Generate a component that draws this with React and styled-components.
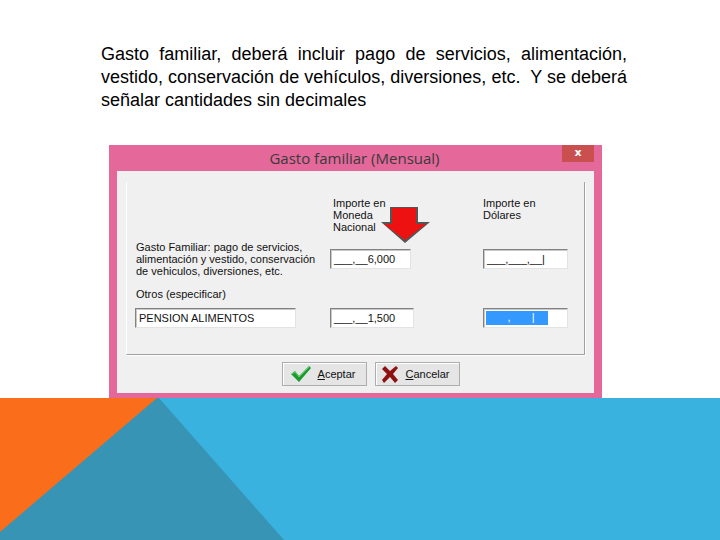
import React from "react";
import styled, { createGlobalStyle } from "styled-components";

const GlobalStyle = createGlobalStyle`
  html, body { margin: 0; padding: 0; background: #fff; }
  body { width: 720px; height: 540px; overflow: hidden; }
`;

const Slide = styled.div`
  width: 720px;
  height: 540px;
  display: flex;
  flex-direction: column;
  background: #fff;
`;

const Intro = styled.p`
  margin: 43px 0 0 101px;
  width: 526px;
  font-family: "Liberation Sans", Arial, sans-serif;
  font-size: 18px;
  line-height: 23px;
  text-align: justify;
  color: #000;
`;

const Dialog = styled.div`
  margin: 33px 0 0 109px;
  width: 493px;
  height: 253px;
  box-sizing: border-box;
  background: #e4689a;
  padding: 0 8px 5px 8px;
  display: flex;
  flex-direction: column;
  font-family: "Liberation Sans", Arial, sans-serif;
  font-size: 11px;
  color: #111;
  flex-shrink: 0;
`;

const TitleBar = styled.div`
  height: 26px;
  display: flex;
  align-items: flex-start;
`;

const Title = styled.div`
  flex: 1;
  text-align: center;
  font-family: "Open Sans", "DejaVu Sans", sans-serif;
  font-size: 15px;
  line-height: 26px;
  color: #3a3a3a;
  padding-left: 30px;
`;

const CloseBtn = styled.div`
  width: 32px;
  height: 17px;
  background: #c9504f;
  color: #fff;
  font-family: "DejaVu Sans", sans-serif;
  font-size: 11px;
  font-weight: bold;
  line-height: 16px;
  text-align: center;
`;

const Body = styled.div`
  flex: 1;
  background: #f0f0f0;
  padding: 11px 9px 0 9px;
  display: flex;
  flex-direction: column;
`;

const Group = styled.div`
  position: relative;
  height: 173px;
  box-sizing: border-box;
  border-left: 1px solid #fff;
  border-right: 1px solid #a0a0a0;
  border-bottom: 1px solid #a0a0a0;
  box-shadow: 1px 1px 0 #fff;
  padding: 15px 0 0 8px;
  display: grid;
  grid-template-columns: 195px 153px 1fr;
  grid-template-rows: 44px 44px 23px 20px;
  line-height: 12px;
`;

const Label = styled.div`
  align-self: start;
  padding-left: ${(p) => p.$pl || 0}px;
  padding-top: ${(p) => p.$pt || 0}px;
`;

const Field = styled.div`
  width: ${(p) => p.$w}px;
  height: 20px;
  box-sizing: border-box;
  background: #fff;
  border-top: 1px solid #828282;
  border-left: 1px solid #828282;
  border-right: 1px solid #e3e3e3;
  border-bottom: 1px solid #e3e3e3;
  box-shadow: inset 1px 1px 0 #c8c8c8;
  padding: 3px 3px 0 3px;
  font-size: 11px;
  line-height: 13px;
  white-space: pre;
  margin-top: ${(p) => p.$mt || 0}px;
`;

const Selection = styled.span`
  display: inline-block;
  width: 62px;
  height: 14px;
  margin: -1px 0 0 -1px;
  background: #3399ff;
  color: #fff;
  vertical-align: top;
`;

const Arrow = styled.svg`
  position: absolute;
  left: 253px;
  top: 24px;
`;

const Buttons = styled.div`
  display: flex;
  gap: 8px;
  padding: 7px 0 0 156px;
`;

const Button = styled.div`
  width: 85px;
  height: 24px;
  box-sizing: border-box;
  background: #e5e5e5;
  border: 1px solid #adadad;
  box-shadow: inset 1px 1px 0 #fff;
  display: flex;
  align-items: center;
  justify-content: center;
  gap: 6px;
  font-size: 11px;
  padding-right: 4px;
  u { text-decoration: underline; }
`;

const Band = styled.svg`
  display: block;
  margin-top: auto;
`;

const Check = () => (
  <svg width="22" height="18" viewBox="0 0 22 18">
    <path d="M1 9 L5 6 L9 11 L19 1 L21 3 L9 17 Z" fill="#1c9a2e" />
    <path d="M2 9 L5 7 L9 12 L19 2" fill="none" stroke="#5fd36a" strokeWidth="1" />
  </svg>
);

const Cross = () => (
  <svg width="18" height="17" viewBox="0 0 18 17">
    <path d="M1 3 L4 0 L9 5 L15 0 L17 2 L12 8 L17 14 L14 17 L9 11 L3 17 L1 14 L6 8 Z" fill="#8e1111" />
  </svg>
);

export default function App() {
  return (
    <>
      <GlobalStyle />
      <Slide>
        <Intro>
          Gasto familiar, deberá incluir pago de servicios, alimentación,
          vestido, conservación de vehículos, diversiones, etc.&nbsp; Y se deberá
          señalar cantidades sin decimales
        </Intro>
        <Dialog>
          <TitleBar>
            <Title>Gasto familiar (Mensual)</Title>
            <CloseBtn>x</CloseBtn>
          </TitleBar>
          <Body>
            <Group>
              <div />
              <Label $pl={3}>Importe en<br />Moneda<br />Nacional</Label>
              <Label>Importe en<br />Dólares</Label>

              <Label $pl={1}>
                Gasto Familiar: pago de servicios,
                <br />alimentación y vestido, conservación
                <br />de vehiculos, diversiones, etc.
              </Label>
              <Field $w={81} $mt={8}>{"___,__6,000"}</Field>
              <Field $w={85} $mt={8}>{"___,___,__|"}</Field>

              <Label $pl={1} $pt={3}>Otros (especificar)</Label>
              <div />
              <div />

              <Field $w={161}>PENSION ALIMENTOS</Field>
              <Field $w={84}>{"___,__1,500"}</Field>
              <Field $w={85}><Selection>{"       ,       |"}</Selection></Field>

              <Arrow width="52" height="38" viewBox="0 0 52 38">
                <path d="M10 1 H38 V16 H50 L25 37 L1 16 H10 Z" fill="#555" />
                <path d="M12 2 H36 V18 H46 L25 34 L4 18 H12 Z" fill="#ee1111" />
              </Arrow>
            </Group>
            <Buttons>
              <Button><Check /><span><u>A</u>ceptar</span></Button>
              <Button><Cross /><span><u>C</u>ancelar</span></Button>
            </Buttons>
          </Body>
        </Dialog>
        <Band width="720" height="142" viewBox="0 0 720 142">
          <rect width="720" height="142" fill="#3ab2df" />
          <polygon points="0,0 159,0 284,142 0,142" fill="#3894b5" />
          <polygon points="0,0 157,0 0,134" fill="#f96d1b" />
        </Band>
      </Slide>
    </>
  );
}
